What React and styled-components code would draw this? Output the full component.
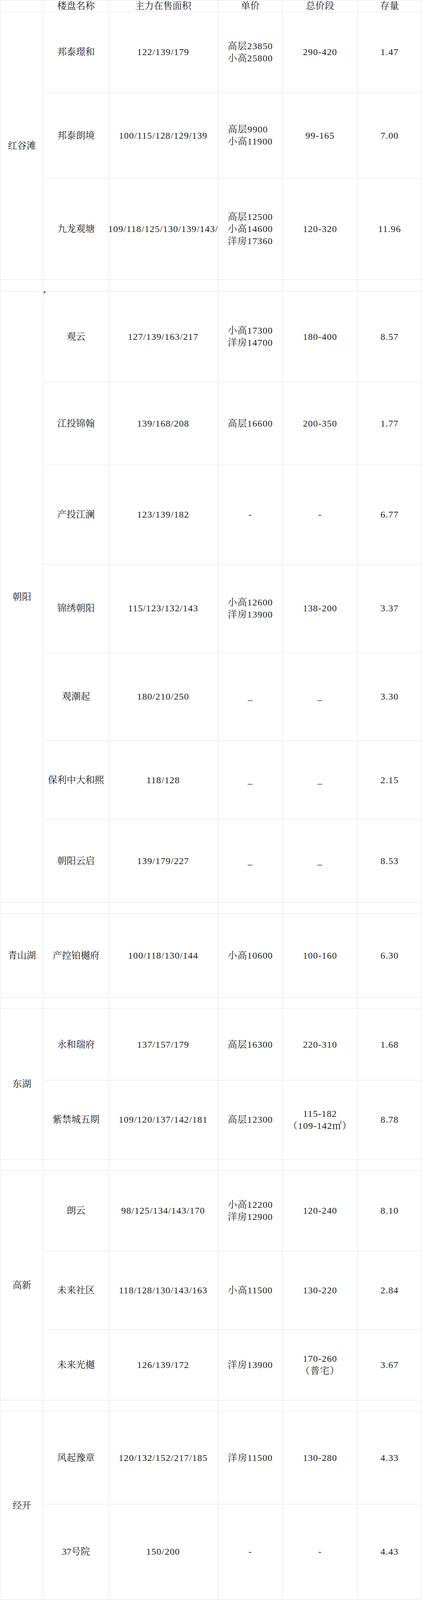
import React from "react";
import styled, { createGlobalStyle } from "styled-components";

const Global = createGlobalStyle`
  html, body { margin: 0; padding: 0; background: #ffffff; }
  body {
    font-family: "Liberation Serif", "Noto Serif CJK SC", "Noto Sans CJK SC", serif;
    color: #1e1e1e;
  }
`;

const Sheet = styled.div`
  display: grid;
  width: 1080px;
  box-sizing: border-box;
  padding: 1px;
  gap: 1px;
  background: #e3e3e3;
  grid-template-columns: 110px 165px 279px 165px 190px 164px;
  grid-template-rows: ${(p) => p.$rows};
  font-size: 24px;
  line-height: 31px;
`;

const Cell = styled.div`
  background: #ffffff;
  display: flex;
  align-items: center;
  justify-content: center;
  overflow: hidden;
  white-space: nowrap;
  position: relative;
  min-width: 0;
  letter-spacing: ${(p) => (p.$num ? "1.1px" : "0")};
  grid-row: ${(p) => (p.$span ? `span ${p.$span}` : "auto")};
`;

const HeadCell = styled(Cell)`
  line-height: 29px;
`;

const Lines = styled.div`
  display: flex;
  flex-direction: column;
  align-items: ${(p) => (p.$left ? "flex-start" : "center")};
`;

const Marker = styled.span`
  position: absolute;
  left: 0;
  top: 0;
  width: 0;
  height: 0;
  border-top: 6px solid #1e7d2e;
  border-right: 6px solid transparent;
`;

const groups = [
  {
    name: "红谷滩",
    rows: [
      { h: 205, n: "邦泰璟和", a: "122/139/179", p: ["高层23850", "小高25800"], t: ["290-420"], s: "1.47" },
      { h: 220, n: "邦泰朗境", a: "100/115/128/129/139", p: ["高层9900", "小高11900"], t: ["99-165"], s: "7.00" },
      { h: 257, n: "九龙观塘", a: "109/118/125/130/139/143/", p: ["高层12500", "小高14600", "洋房17360"], t: ["120-320"], s: "11.96" },
    ],
    gap: 29,
  },
  {
    name: "朝阳",
    marker: true,
    rows: [
      { h: 232, n: "观云", a: "127/139/163/217", p: ["小高17300", "洋房14700"], t: ["180-400"], s: "8.57" },
      { h: 211, n: "江投锦翰", a: "139/168/208", p: ["高层16600"], t: ["200-350"], s: "1.77" },
      { h: 253, n: "产投江澜", a: "123/139/182", p: "-", t: "-", s: "6.77" },
      { h: 225, n: "锦绣朝阳", a: "115/123/132/143", p: ["小高12600", "洋房13900"], t: ["138-200"], s: "3.37" },
      { h: 225, n: "观潮起", a: "180/210/250", p: "_", t: "_", s: "3.30" },
      { h: 200, n: "保利中大和熙", a: "118/128", p: "_", t: "_", s: "2.15" },
      { h: 212, n: "朝阳云启", a: "139/179/227", p: "_", t: "_", s: "8.53" },
    ],
    gap: 27,
  },
  {
    name: "青山湖",
    rows: [
      { h: 214, n: "产控铂樾府", a: "100/118/130/144", p: ["小高10600"], t: ["100-160"], s: "6.30" },
    ],
    gap: 28,
  },
  {
    name: "东湖",
    rows: [
      { h: 182, n: "永和瑞府", a: "137/157/179", p: ["高层16300"], t: ["220-310"], s: "1.68" },
      { h: 201, n: "紫禁城五期", a: "109/120/137/142/181", p: ["高层12300"], t: ["115-182", "（109-142㎡）"], s: "8.78" },
    ],
    gap: 28,
  },
  {
    name: "高新",
    rows: [
      { h: 205, n: "朗云", a: "98/125/134/143/170", p: ["小高12200", "洋房12900"], t: ["120-240"], s: "8.10" },
      { h: 200, n: "未来社区", a: "118/128/130/143/163", p: ["小高11500"], t: ["130-220"], s: "2.84" },
      { h: 180, n: "未来光樾", a: "126/139/172", p: ["洋房13900"], t: ["170-260", "（普宅）"], s: "3.67" },
    ],
    gap: 28,
  },
  {
    name: "经开",
    rows: [
      { h: 236, n: "风起豫章", a: "120/132/152/217/185", p: ["洋房11500"], t: ["130-280"], s: "4.33" },
      { h: 243, n: "37号院", a: "150/200", p: "-", t: "-", s: "4.43" },
    ],
  },
];

const headers = ["", "楼盘名称", "主力在售面积", "单价", "总价段", "存量"];

function Value({ v, left }) {
  if (typeof v === "string") return <span>{v}</span>;
  return (
    <Lines $left={left}>
      {v.map((l) => (
        <span key={l}>{l}</span>
      ))}
    </Lines>
  );
}

export default function App() {
  const heights = [29];
  const cells = headers.map((h, i) => <HeadCell key={`h${i}`}>{h}</HeadCell>);

  groups.forEach((g, gi) => {
    g.rows.forEach((r, ri) => {
      heights.push(r.h);
      if (ri === 0) {
        cells.push(
          <Cell key={`g${gi}`} $span={g.rows.length}>
            {g.name}
          </Cell>
        );
      }
      cells.push(
        <Cell key={`n${gi}-${ri}`}>
          {g.marker && ri === 0 && <Marker />}
          {r.n}
        </Cell>,
        <Cell key={`a${gi}-${ri}`} $num>
          {r.a}
        </Cell>,
        <Cell key={`p${gi}-${ri}`} $num>
          <Value v={r.p} left />
        </Cell>,
        <Cell key={`t${gi}-${ri}`} $num>
          <Value v={r.t} />
        </Cell>,
        <Cell key={`s${gi}-${ri}`} $num>
          {r.s}
        </Cell>
      );
    });
    if (g.gap) {
      heights.push(g.gap);
      for (let c = 0; c < 6; c += 1) cells.push(<Cell key={`gap${gi}-${c}`} />);
    }
  });

  const rows = heights.map((h) => `${h}px`).join(" ");

  return (
    <>
      <Global />
      <Sheet $rows={rows}>{cells}</Sheet>
    </>
  );
}
